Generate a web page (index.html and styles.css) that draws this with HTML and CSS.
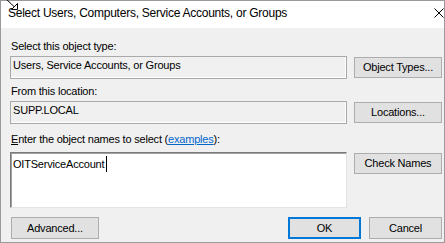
FILE: index.html
```html
<!DOCTYPE html>
<html lang="en">
<head>
  <meta charset="UTF-8" />
  <title>Select Users, Computers, Service Accounts, or Groups</title>
  <link rel="stylesheet" href="styles.css">
</head>
<body>

  <div class="window">
    <div class="titlebar">
      <span class="title">Select Users, Computers, Service Accounts, or Groups</span>
      <svg class="close" width="10" height="10" viewBox="0 0 10 10">
        <path d="M0.5 0.5 L9.5 9.5 M9.5 0.5 L0.5 9.5" stroke="#000" stroke-width="1" fill="none"/>
      </svg>
    </div>

    <div class="content">
      <div class="label">Select this object type:</div>
      <div class="row">
        <div class="field">Users, Service Accounts, or Groups</div>
        <button class="btn">Object Types...</button>
      </div>

      <div class="label gap">From this location:</div>
      <div class="row">
        <div class="field">SUPP.LOCAL</div>
        <button class="btn">Locations...</button>
      </div>

      <div class="label gap-lg"><u>E</u>nter the object names to select (<a href="#">examples</a>):</div>
      <div class="row names-row">
        <div class="names">OITServiceAccount<span class="caret"></span></div>
        <button class="btn">Check Names</button>
      </div>

      <div class="footer">
        <button class="btn wide">Advanced...</button>
        <div class="actions">
          <button class="btn ok">OK</button>
          <button class="btn">Cancel</button>
        </div>
      </div>
    </div>

    <!-- mouse cursor caught in the screenshot -->
    <svg class="cursor" width="14" height="11" viewBox="0 0 14 11">
      <path d="M0 -2 L9.5 7" stroke="#000" stroke-width="1" fill="none"/>
      <path d="M12.5 9.5 L12.5 3.5 L6.5 9.5 Z" fill="#fff" stroke="#000" stroke-width="1"/>
    </svg>
  </div>

</body>
</html>
```

FILE: styles.css
```css
* { margin: 0; padding: 0; box-sizing: border-box; }
body { font-family: 'Liberation Sans', Arial, sans-serif; background: #fff; color: #000; }

.window {
  position: relative;
  width: 445px;
  height: 243px;
  border: 1px solid #9a9a9a;
  background: #f0f0f0;
  display: flex;
  flex-direction: column;
}

.titlebar {
  height: 27px;
  background: #fff;
  display: flex;
  align-items: flex-start;
  padding-left: 7px;
}

.title {
  font-size: 12px;
  line-height: 16px;
  margin-top: 4px;
  letter-spacing: -0.25px;
}

.close {
  margin-left: auto;
  margin-top: 7px;
}

.content {
  flex: 1;
  padding: 12px 1px 0 9px;
  font-size: 11px;
  letter-spacing: -0.2px;
}

.label {
  line-height: 13px;
  height: 13px;
  margin-left: 1px;
}

.label.gap { margin-top: 6px; }
.label.gap-lg { margin-top: 9px; }

.label a {
  color: #0066cc;
  text-decoration: underline;
}

/* --- field on the left, button column on the right --- */
.row {
  display: grid;
  grid-template-columns: 337px 88px;
  column-gap: 7px;
  align-items: start;
  margin-top: 3px;
}

.names-row { margin-top: 6px; }

.field {
  height: 23px;
  border: 1px solid #a9a9a9;
  box-shadow: inset -1px -1px 0 #fff;
  padding: 2px 2px;
  line-height: 13px;
}

.names {
  height: 56px;
  background: #fff;
  border: 1px solid;
  border-color: #7a7a7a #e3e3e3 #e3e3e3 #7a7a7a;
  box-shadow: inset 1px 1px 0 #a0a0a0;
  padding: 3px 2px;
  line-height: 13px;
}

.caret {
  display: inline-block;
  width: 1px;
  height: 16px;
  background: #000;
  vertical-align: -4px;
  margin-left: 2px;
}

.btn {
  font-family: inherit;
  font-size: 11px;
  letter-spacing: -0.2px;
  color: #000;
  background: #e1e1e1;
  border: 1px solid #adadad;
  height: 21px;
  margin-top: 1px;
  line-height: 17px;
  text-align: center;
  cursor: pointer;
}

/* --- bottom buttons --- */
.footer {
  display: flex;
  justify-content: space-between;
  margin-top: 9px;
}

.footer .btn {
  height: 22px;
  margin-top: 0;
  width: 73px;
}

.footer .btn.wide {
  width: 88px;
  margin-left: 1px;
}

.actions {
  display: flex;
  gap: 8px;
  margin-right: 1px;
}

.btn.ok {
  border: 2px solid #0078d7;
}

.cursor {
  position: absolute;
  left: 4px;
  top: -1px;
}
```
